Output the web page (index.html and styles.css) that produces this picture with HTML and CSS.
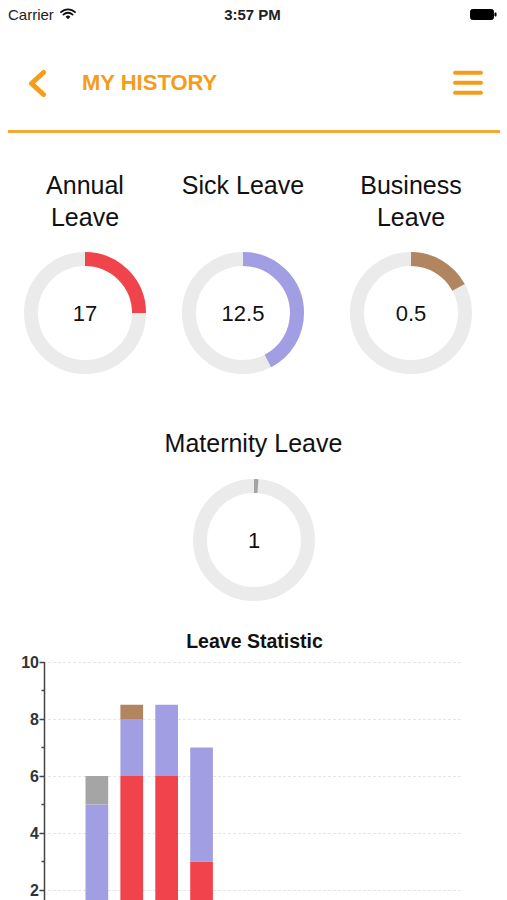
FILE: index.html
```html
<!DOCTYPE html>
<html lang="en">
<head>
  <meta charset="UTF-8">
  <title>My History</title>
  <link rel="stylesheet" href="styles.css">
</head>
<body>
  <div class="status">
    <div class="status-left">
      Carrier
      <svg class="wifi" width="16" height="12" viewBox="0 0 16 12">
        <path d="M1 4.2 A10 10 0 0 1 15 4.2" fill="none" stroke="#111" stroke-width="1.8" stroke-linecap="round"/>
        <path d="M3.4 6.6 A6.6 6.6 0 0 1 12.6 6.6" fill="none" stroke="#111" stroke-width="1.8" stroke-linecap="round"/>
        <path d="M8 11.2 L5.6 8.8 A3.4 3.4 0 0 1 10.4 8.8 Z" fill="#111"/>
      </svg>
    </div>
    <div class="status-time">3:57 PM</div>
    <div class="status-right">
      <svg width="27" height="11" viewBox="0 0 27 11">
        <rect x="0.5" y="0.5" width="23" height="10" rx="2" fill="#000" stroke="#000"/>
        <rect x="24.5" y="3.5" width="2" height="4" rx="0.8" fill="#000"/>
      </svg>
    </div>
  </div>

  <div class="topbar">
    <svg class="back" width="20" height="30" viewBox="0 0 20 30">
      <path d="M16.5 4.5 L4.5 15.5 L16.5 26.5" fill="none" stroke="#f59c1b" stroke-width="5" stroke-linecap="round" stroke-linejoin="round"/>
    </svg>
    <div class="title">MY HISTORY</div>
    <svg class="menu" width="30" height="26" viewBox="0 0 30 26">
      <line x1="2" y1="2.7" x2="28" y2="2.7"/>
      <line x1="2" y1="12.7" x2="28" y2="12.7"/>
      <line x1="2" y1="22.7" x2="28" y2="22.7"/>
    </svg>
  </div>
  <div class="rule"></div>

  <div class="gauges">
    <div class="gauge">
      <div class="gauge-label">Annual Leave</div>
      <svg class="ring" width="122" height="122" viewBox="0 0 122 122">
        <circle class="track" cx="61" cy="61" r="54"/>
        <circle class="arc annual" cx="61" cy="61" r="54" stroke-dasharray="84.8 339.3" transform="rotate(-90 61 61)"/>
        <text x="61" y="69">17</text>
      </svg>
    </div>
    <div class="gauge">
      <div class="gauge-label">Sick Leave</div>
      <svg class="ring" width="122" height="122" viewBox="0 0 122 122">
        <circle class="track" cx="61" cy="61" r="54"/>
        <circle class="arc sick" cx="61" cy="61" r="54" stroke-dasharray="143.5 339.3" transform="rotate(-90 61 61)"/>
        <text x="61" y="69">12.5</text>
      </svg>
    </div>
    <div class="gauge">
      <div class="gauge-label">Business Leave</div>
      <svg class="ring" width="122" height="122" viewBox="0 0 122 122">
        <circle class="track" cx="61" cy="61" r="54"/>
        <circle class="arc business" cx="61" cy="61" r="54" stroke-dasharray="58 339.3" transform="rotate(-90 61 61)"/>
        <text x="61" y="69">0.5</text>
      </svg>
    </div>
  </div>

  <div class="gauge single">
    <div class="gauge-label wide">Maternity Leave</div>
    <svg class="ring" width="122" height="122" viewBox="0 0 122 122">
      <circle class="track" cx="61" cy="61" r="54"/>
      <circle class="arc maternity" cx="61" cy="61" r="54" stroke-dasharray="4 339.3" transform="rotate(-90 61 61)"/>
      <text x="61" y="69">1</text>
    </svg>
  </div>

  <div class="chart">
    <div class="chart-title">Leave Statistic</div>
    <svg class="chart-svg" width="507" height="248" viewBox="0 0 507 248">
      <!-- grid -->
      <g class="grid">
        <line x1="48" y1="10.5" x2="463" y2="10.5"/>
        <line x1="48" y1="67.5" x2="463" y2="67.5"/>
        <line x1="48" y1="124.5" x2="463" y2="124.5"/>
        <line x1="48" y1="181.5" x2="463" y2="181.5"/>
        <line x1="48" y1="238.5" x2="463" y2="238.5"/>
      </g>

      <!-- bars: Feb, Mar, Apr, May -->
      <rect class="sick" x="85.5" y="152.5" width="22.7" height="142.5"/>
      <rect class="maternity" x="85.5" y="124" width="22.7" height="28.5"/>

      <rect class="annual" x="120.4" y="124" width="22.7" height="171"/>
      <rect class="sick" x="120.4" y="67" width="22.7" height="57"/>
      <rect class="business" x="120.4" y="52.75" width="22.7" height="14.25"/>

      <rect class="annual" x="155.3" y="124" width="22.7" height="171"/>
      <rect class="sick" x="155.3" y="52.75" width="22.7" height="71.25"/>

      <rect class="annual" x="190.2" y="209.5" width="22.7" height="85.5"/>
      <rect class="sick" x="190.2" y="95.5" width="22.7" height="114"/>

      <!-- y axis -->
      <g class="axis">
        <line x1="44.5" y1="10" x2="44.5" y2="295"/>
        <line x1="39.5" y1="10.5" x2="44.5" y2="10.5"/>
        <line x1="41.5" y1="38.5" x2="44.5" y2="38.5"/>
        <line x1="39.5" y1="67.5" x2="44.5" y2="67.5"/>
        <line x1="41.5" y1="95.5" x2="44.5" y2="95.5"/>
        <line x1="39.5" y1="124.5" x2="44.5" y2="124.5"/>
        <line x1="41.5" y1="152.5" x2="44.5" y2="152.5"/>
        <line x1="39.5" y1="181.5" x2="44.5" y2="181.5"/>
        <line x1="41.5" y1="209.5" x2="44.5" y2="209.5"/>
        <line x1="39.5" y1="238.5" x2="44.5" y2="238.5"/>
      </g>
      <g class="ticks">
        <text x="39" y="16">10</text>
        <text x="39" y="73">8</text>
        <text x="39" y="130">6</text>
        <text x="39" y="187">4</text>
        <text x="39" y="244">2</text>
      </g>
    </svg>
  </div>
</body>
</html>
```

FILE: styles.css
```css
body {
  margin: 0;
  background-color: #fff;
  color: #111;
  font-family: 'Liberation Sans', Arial, Helvetica, sans-serif;
}

/* Status bar */
.status {
  display: grid;
  grid-template-columns: 1fr auto 1fr;
  align-items: center;
  height: 28px;
  padding: 0 10px 0 8px;
  font-size: 15px;
}

.status-left {
  display: flex;
  align-items: center;
  gap: 6px;
  color: #222;
}

.status-time {
  font-weight: bold;
  font-size: 15px;
  color: #222;
}

.status-right {
  display: flex;
  justify-content: flex-end;
}

/* Header */
.topbar {
  display: flex;
  align-items: center;
  height: 94px;
  padding: 8px 24px 0 27px;
}

.title {
  margin-left: 35px;
  font-size: 22px;
  font-weight: bold;
  color: #f59c1b;
  flex: 1;
}

.menu line {
  stroke: #f59c1b;
  stroke-width: 4;
  stroke-linecap: round;
}

.rule {
  height: 3px;
  margin: 0 7px 0 8px;
  background-color: #f7a832;
}

/* Gauges */
.gauges {
  display: grid;
  grid-template-columns: 170px 146px 190px;
  padding-top: 36px;
}

.gauge {
  display: flex;
  flex-direction: column;
  align-items: center;
}

.gauge-label {
  width: 130px;
  min-height: 64px;
  font-size: 25px;
  line-height: 32px;
  text-align: center;
  color: #111;
}

.gauge-label.wide {
  width: auto;
  min-height: 32px;
}

.ring {
  margin-top: 19px;
}

.ring .track {
  fill: none;
  stroke: #ebebeb;
  stroke-width: 14;
}

.ring .arc {
  fill: none;
  stroke-width: 14;
}

.ring text {
  font-size: 22px;
  text-anchor: middle;
  fill: #111;
}

.ring .annual { stroke: #f0434c; }
.ring .sick { stroke: #a29ee4; }
.ring .business { stroke: #b0855f; }
.ring .maternity { stroke: #a3a3a3; }

.single {
  margin-top: 53px;
}

.single .ring {
  margin-top: 20px;
}

/* Chart */
.chart {
  margin-top: 29px;
}

.chart-title {
  font-size: 19.5px;
  line-height: 22px;
  font-weight: bold;
  text-align: center;
  padding-left: 2px;
}

.chart-svg {
  display: block;
}

.chart-svg rect.annual { fill: #f0434c; }
.chart-svg rect.sick { fill: #a29ee4; }
.chart-svg rect.business { fill: #b0855f; }
.chart-svg rect.maternity { fill: #a5a5a5; }

.grid line {
  stroke: #e6e6e6;
  stroke-width: 1;
  stroke-dasharray: 3 2;
}

.axis line {
  stroke: #444;
  stroke-width: 1.5;
}

.ticks text {
  font-size: 16px;
  font-weight: bold;
  fill: #333;
  text-anchor: end;
}
```
